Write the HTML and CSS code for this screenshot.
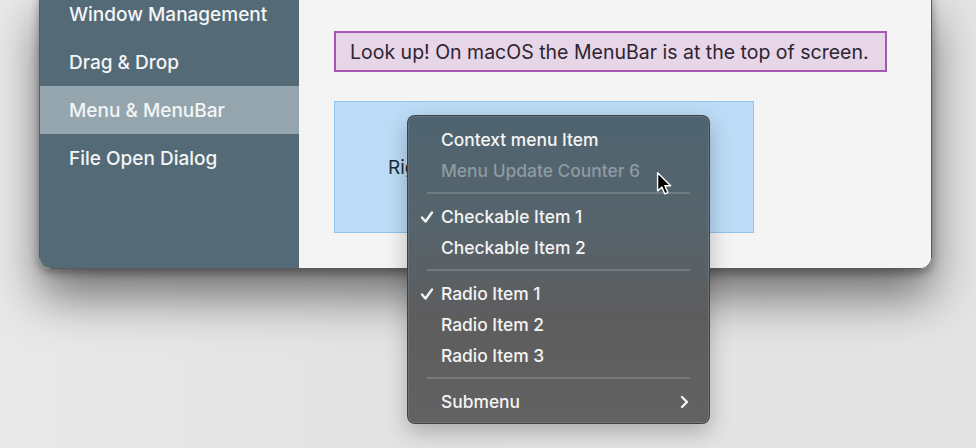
FILE: index.html
```html
<!DOCTYPE html>
<html>
<head>
    <title>Menu &amp; MenuBar</title>
    <link rel="stylesheet" href="styles.css">
</head>
<body>
    <div class="desktop">
        <div class="window">
            <nav class="sidebar">
                <div class="nav-item">Window Management</div>
                <div class="nav-item">Drag &amp; Drop</div>
                <div class="nav-item selected">Menu &amp; MenuBar</div>
                <div class="nav-item">File Open Dialog</div>
            </nav>
            <main class="content">
                <div class="notice">Look up! On macOS the MenuBar is at the top of screen.</div>
                <div class="target">Right click here for the menu</div>
            </main>
        </div>

        <!-- context menu popup -->
        <div class="context-menu">
            <div class="menu-item">Context menu Item</div>
            <div class="menu-item disabled">Menu Update Counter 6</div>
            <div class="separator"></div>
            <div class="menu-item">
                <svg class="check" viewBox="0 0 14 14"><path d="M2 7.5 L5.5 11.5 L12 2.5" /></svg>
                Checkable Item 1
            </div>
            <div class="menu-item">Checkable Item 2</div>
            <div class="separator"></div>
            <div class="menu-item">
                <svg class="check" viewBox="0 0 14 14"><path d="M2 7.5 L5.5 11.5 L12 2.5" /></svg>
                Radio Item 1
            </div>
            <div class="menu-item">Radio Item 2</div>
            <div class="menu-item">Radio Item 3</div>
            <div class="separator"></div>
            <div class="menu-item submenu">
                Submenu
                <svg class="chevron" viewBox="0 0 10 14"><path d="M3 2 L8 7 L3 12" /></svg>
            </div>
        </div>

        <svg class="cursor" viewBox="0 0 16 24">
            <path d="M1.5 1.5 L1.5 18.5 L5.5 14.8 L8.3 21.3 L11.2 20 L8.4 13.6 L13.8 13.6 Z" />
        </svg>
    </div>
</body>
</html>
```

FILE: styles.css
```css
html, body {
    margin: 0;
    height: 100%;
}
body {
    font-family: Inter, "Noto Sans", sans-serif;
    background: linear-gradient(90deg, #e9e9ea 0%, #e3e3e3 40%, #e4e4e4 100%);
    overflow: hidden;
}
.desktop {
    display: flow-root;
    position: relative;
    height: 448px;
    padding-left: 39px;
}
.window {
    display: flex;
    width: 891px;
    height: 278px;
    margin-top: -11px;
    border: 1px solid #5a5a5a;
    border-radius: 12px;
    overflow: hidden;
    box-shadow: 0 28px 48px rgba(0, 0, 0, 0.5), 0 4px 10px rgba(0, 0, 0, 0.35);
}
.sidebar {
    width: 259px;
    background: #546a76;
    flex-shrink: 0;
}
.nav-item {
    height: 48px;
    display: flex;
    align-items: center;
    padding-left: 29px;
    color: #f3f5f6;
    font-size: 19px;
    font-weight: 500;
}
.nav-item.selected {
    background: #95a5ad;
}
.content {
    flex: 1;
    background: #f4f4f4;
    padding: 41px 0 0 35px;
}
.notice {
    width: 553px;
    height: 41px;
    box-sizing: border-box;
    border: 2px solid #a457b3;
    background: #e6d6e8;
    color: #2e2430;
    font-size: 19.5px;
    display: flex;
    align-items: center;
    padding-left: 14px;
}
.target {
    margin-top: 29px;
    width: 420px;
    height: 132px;
    box-sizing: border-box;
    border: 1px solid #8ec3ee;
    background: #bcdcf7;
    color: #1f2a33;
    font-size: 19px;
    display: flex;
    align-items: center;
    padding-left: 53px;
}
.context-menu {
    position: absolute;
    left: 407px;
    top: 115px;
    width: 303px;
    height: 309px;
    box-sizing: border-box;
    padding-top: 8px;
    border: 1px solid rgba(40, 40, 40, 0.55);
    border-radius: 8px;
    background: linear-gradient(180deg, #4f6470 0%, #56646c 35%, #5d5d5e 65%, #626262 100%);
    box-shadow: inset 0 0 0 1px rgba(255, 255, 255, 0.12), 0 8px 22px rgba(0, 0, 0, 0.25);
}
.menu-item {
    position: relative;
    height: 31px;
    display: flex;
    align-items: center;
    padding-left: 33px;
    padding-right: 20px;
    color: #f4f4f4;
    font-size: 17.4px;
    font-weight: 450;
}
.menu-item.disabled {
    color: #8d9ba3;
}
.separator {
    height: 2px;
    margin: 6px 19px 7px 19px;
    background: rgba(255, 255, 255, 0.16);
}
.check {
    position: absolute;
    left: 12px;
    top: 9px;
    width: 14px;
    height: 14px;
    fill: none;
    stroke: #f4f4f4;
    stroke-width: 2.4;
    stroke-linecap: round;
    stroke-linejoin: round;
}
.submenu {
    justify-content: space-between;
}
.chevron {
    width: 10px;
    height: 14px;
    fill: none;
    stroke: #f4f4f4;
    stroke-width: 2.4;
    stroke-linecap: round;
    stroke-linejoin: round;
}
.cursor {
    position: absolute;
    left: 656px;
    top: 171px;
    width: 17px;
    height: 26px;
    fill: #000;
    stroke: #fff;
    stroke-width: 1.3;
    stroke-linejoin: round;
}
```
